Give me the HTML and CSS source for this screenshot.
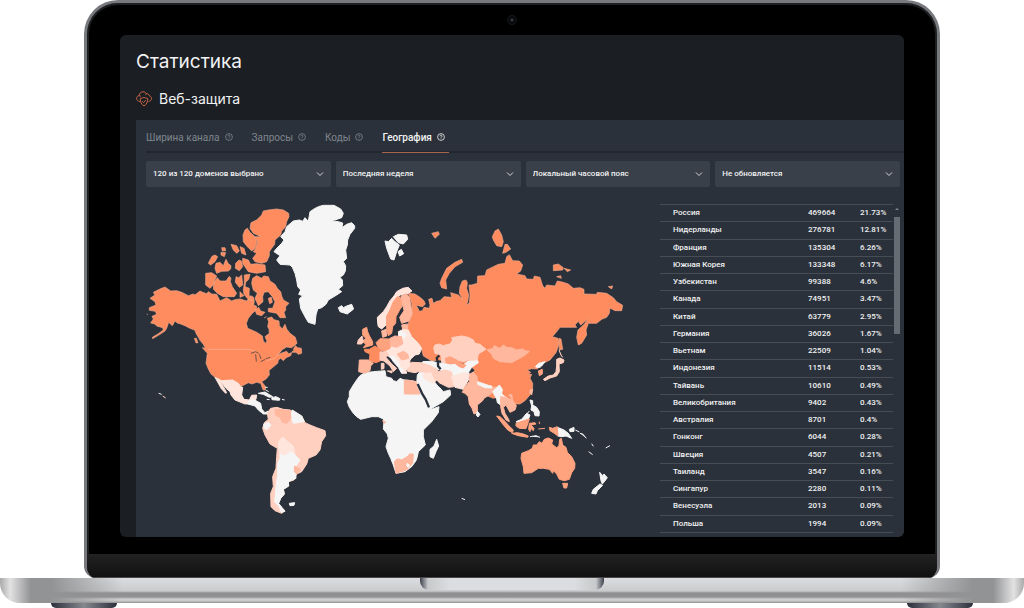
FILE: index.html
```html
<!DOCTYPE html>
<html lang="ru">
<head>
    <meta charset="UTF-8">
    <meta name="viewport" content="width=device-width, initial-scale=1.0">
    <title>Статистика</title>
    <link rel="stylesheet" href="styles.css">
</head>
<body>
<div class="laptop">
    <div class="lid">
        <div class="camera"></div>
        <main class="screen">
            <h1>Статистика</h1>
            <h2>
                <svg class="cloud" viewBox="0 0 16 16"><path d="M4.5 10.5H3.7C1.8 10.2.5 9 .6 7.3.7 5.8 1.8 4.9 3 4.7 3.2 2.4 5 .8 7 .8c1.700 0 2.800.8 3.500 2.100 1.500-.3 2.700.6 2.900 2 1.300.3 2.100 1.200 2.100 2.600 0 1.700-1.200 2.800-2.900 3"/><path d="M3 4.700c.7 0 1.300.2 1.800.6M10.500 2.900c-.6.2-1 .5-1.200.9"/><path d="M8 6.200c1.200.9 2.300 1 3.700 1.100.2 3.600-1.100 6-3.700 7.700-2.600-1.700-3.900-4.100-3.700-7.700C5.700 7.200 6.800 7.100 8 6.200z"/><path d="M6.300 10.300l1.300 1.300 2.200-2.300"/></svg>
                Веб-защита
            </h2>
            <section class="panel">
                <nav class="tabs">
                    <a href="#width">Ширина канала <svg class="help" viewBox="0 0 8 8"><circle cx="4" cy="4" r="3.400"/><path d="M3 3.300c0-1.600 2.200-1.300 2 0C4.900 3.900 4 3.900 4 4.800M4 5.500v.6"/></svg></a>
                    <a href="#requests">Запросы <svg class="help" viewBox="0 0 8 8"><circle cx="4" cy="4" r="3.400"/><path d="M3 3.300c0-1.600 2.200-1.300 2 0C4.900 3.900 4 3.900 4 4.800M4 5.500v.6"/></svg></a>
                    <a href="#codes">Коды <svg class="help" viewBox="0 0 8 8"><circle cx="4" cy="4" r="3.400"/><path d="M3 3.300c0-1.600 2.200-1.300 2 0C4.900 3.900 4 3.900 4 4.800M4 5.500v.6"/></svg></a>
                    <a href="#geo" class="active">География <svg class="help" viewBox="0 0 8 8"><circle cx="4" cy="4" r="3.400"/><path d="M3 3.300c0-1.600 2.200-1.300 2 0C4.900 3.900 4 3.900 4 4.800M4 5.500v.6"/></svg></a>
                </nav>
                <form class="filters">
                    <label class="filter"><select aria-label="Домены"><option>120 из 120 доменов выбрано</option></select><svg viewBox="0 0 8 6"><path d="M1 1.500l3 3 3-3"/></svg></label>
                    <label class="filter"><select aria-label="Период"><option>Последняя неделя</option></select><svg viewBox="0 0 8 6"><path d="M1 1.500l3 3 3-3"/></svg></label>
                    <label class="filter"><select aria-label="Часовой пояс"><option>Локальный часовой пояс</option></select><svg viewBox="0 0 8 6"><path d="M1 1.500l3 3 3-3"/></svg></label>
                    <label class="filter"><select aria-label="Обновление"><option>Не обновляется</option></select><svg viewBox="0 0 8 6"><path d="M1 1.500l3 3 3-3"/></svg></label>
                </form>
                <div class="geo">
                    <svg class="map" viewBox="146 204 510 333">
                        <!-- North America -->
                        <g transform="translate(140 195) scale(.33333)" class="c1 coast">
                            <path d="M30 310L45 300 40 292 60 282 75 276 92 288 110 287 125 292 145 302 160 297 165 300 180 288 188 292 200 296 205 290 215 297 230 298 240 318 260 308 275 318 285 314 300 312 310 315 320 318 332 302 340 306 343 318 341 330 350 334 348 345 335 357 325 370 319 385 323 400 335 405 350 412 367 423 370 438 377 445 381 438 375 425 388 415 387 402 383 395 386 380 382 370 395 366 402 374 417 378 418 392 427 402 435 388 440 402 450 415 466 427 471 445 455 458 440 456 425 465 413 480 425 474 440 469 446 476 455 473 452 482 438 488 430 497 422 490 415 495 413 505 395 520 387 526 388 540 378 552 365 560 376 574 376 585 369 584 362 565 350 562 335 567 325 563 312 570 300 575 295 563 288 566 278 555 262 558 245 557 225 547 213 537 205 522 198 505 200 490 202 475 187 458 196 460 190 448 180 436 175 427 168 415 165 406 150 400 135 392 120 386 112 384 105 378 97 392 86 382 80 400 75 408 60 418 38 431 37 427 55 416 70 405 68 398 50 393 45 387 32 384 40 372 36 364 50 358 46 349 28 346 28 338 48 330 45 320z"/>
                            <path d="M365 60L370 48 385 45 410 42 430 45 446 55 447 65 440 80 437 95 425 108 422 120 405 135 404 148 395 160 388 170 388 182 380 200 365 205 345 200 338 190 350 175 340 170 347 160 352 140 345 125 363 125 340 115 330 100 333 83 350 75zM315 105L322 100 330 112 344 124 350 140 345 160 335 168 322 155 310 140 309 120z"/>
                            <path d="M273 148L290 152 298 168 290 175 280 165zM300 155L312 160 318 180 305 175zM245 158h10l2 9-10 1zM243 172l14 1-4 12-10-5zM210 195L216 184 225 180 233 185 225 200 212 210 205 205zM228 205L240 202 250 212 258 193 265 206 273 212 272 222 265 228 245 229 230 235 225 220zM287 205L297 195 304 198 308 215 298 227 286 220zM308 190L325 195 332 208 350 206 375 210 377 230 350 235 325 230 308 205zM197 235L215 233 230 243 222 260 220 270 210 280 197 270z"/>
                            <path d="M222 262L232 248 240 258 258 258 268 244 273 250 271 260 277 275 290 295 283 305 250 305 232 295 220 282zM288 245L296 248 305 240 308 270 298 277 286 262zM313 240L330 238 326 253 317 262 315 275 328 280 327 300 337 318 322 310 312 298 310 285 313 265zM300 290L312 302 300 307zM338 250L350 242 365 250 371 243 385 245 390 258 405 268 412 280 422 290 425 303 430 315 447 325 437 335 437 345 432 352 437 368 420 368 410 355 385 350 385 340 398 340 405 320 397 305 385 290 372 292 368 305 369 320 355 332 345 310 352 295 340 285 335 265z"/>
                            <path d="M345 345L356 337 362 348 375 352 365 362 350 358zM385 310l9-3 3 15-8 4zM456 472L466 452 473 458 484 460 485 475 475 478 468 472zM163 430l6 0 5 13-6 1zM20 357l4 2M380 365l-8 4"/>
                            <path class="border" d="M205 463H328L350 470M380 497L405 490 425 466"/>
                            <path class="water" d="M333 475L347 470 356 475M347 478L349 500M358 478L363 492M362 500L376 493M378 491L391 487M451 467L461 466"/>
                        </g>
                        <!-- Greenland, Iceland, Svalbard -->
                        <g transform="translate(260 195) scale(.33333)" class="c6">
                            <path d="M175 35L190 31 222 31 233 37 242 42 250 55 245 68 225 75 210 77 235 80 248 84 246 98 260 88 275 83 284 92 284 100 270 118 263 135 262 150 257 165 260 190 250 200 257 212 256 228 250 240 240 247 247 255 248 272 235 283 245 290 230 300 205 315 198 328 185 338 173 342 168 360 165 388 145 382 135 365 122 340 118 312 128 302 116 298 122 285 113 275 110 255 105 235 97 217 90 210 60 208 50 195 60 182 42 170 50 160 65 145 72 135 62 125 75 110 80 95 100 78 118 75 128 79 135 68 145 79 150 50 162 42z"/>
                            <path d="M235 338L245 332 250 338 260 333 275 328 281 342 262 357 240 350zM375 138L385 140 395 130 405 140 418 150 410 170 402 195 392 192 380 160zM400 125L415 118 440 120 443 133 430 147 415 143zM414 170l10-7 7 13-12 7z"/>
                        </g>
                        <!-- Latin America -->
                        <g transform="translate(150 340) scale(.33333)">
                            <path class="c5" d="M195 112L215 122 248 120 265 130 272 140 278 142 275 165 282 178 298 180 305 166 320 165 318 178 300 190 285 192 255 180 243 165 240 155 228 145 210 122 220 140 230 158 227 160 214 146z"/>
                            <path class="c6" d="M290 191L304 178 318 182 332 190 335 207 345 218 355 213 352 222 340 222 325 210 315 198zM325 160L345 156 368 170 358 172 340 163zM365 173L378 170 390 176 388 181 366 179zM350 178l9 1M396 178l8 2M345 142l8 0M347 150l9 5M26 160l9 3"/>
                            <path class="c4" d="M352 220L362 205 380 202 400 208 420 210 435 218 455 228 465 248 480 255 500 263 525 272 527 287 515 305 510 330 498 345 475 355 470 372 455 395 440 402 432 420 415 425 416 438 400 448 403 462 392 475 385 490 395 503 405 512 395 520 375 512 363 500 362 460 370 440 368 410 378 385 380 350 382 325 360 312 345 285 338 265 343 248 355 238zM38 168l9 6"/>
                            <path class="c6" d="M400 345L425 330 435 345 450 360 438 378 437 400 438 415 415 425 416 438 400 448 403 462 392 475 386 490 400 508 405 514 394 517 387 500 374 485 378 440 383 405 383 370 390 355 390 340zM427 210L455 228 463 245 430 250 422 230zM342 252L355 247 363 256 350 270 341 262zM418 490L434 488 432 496 420 497z"/>
                            <path class="c5" d="M388 300L400 292 412 304 430 318 435 340 420 332 405 345 390 340 385 320z"/>
                            <path class="c3" d="M375 208L400 210 420 213 423 235 410 250 398 247 390 232 376 225zM434 378L452 388 440 402 433 395z"/>
                        </g>
                        <!-- Africa and the Middle East -->
                        <g transform="translate(340 350) scale(.33333)">
                            <path class="c6" d="M75 68L100 65 135 62 138 80 155 85 160 92 170 95 180 85 192 90 215 92 228 95 235 115 245 135 255 152 265 175 275 178 297 170 295 188 275 215 250 240 250 260 256 285 235 305 232 320 228 332 215 350 195 365 168 370 160 345 152 325 145 310 138 290 145 265 142 252 130 237 132 215 130 207 115 200 95 200 62 208 50 200 40 190 28 172 22 155 28 140 28 125 40 105 50 90 60 77zM270 320L270 298 282 288 290 268 296 288 288 305 280 325z"/>
                            <path class="c6" d="M232 75L240 65 262 62 280 90 290 103 310 125 330 120 332 135 310 155 270 178 262 165 250 145 242 122 230 100z"/>
                            <path class="c5" d="M248 75L262 60 280 70 290 98 275 98 255 88z"/>
                            <path class="c3" d="M193 90L215 92 230 97 229 108 240 132 193 132zM163 335L172 326 185 330 205 318 208 312 220 312 218 340 200 360 168 370zM128 212l9 4-4 4z"/>
                            <path class="c6" d="M202 340l7 6-4 6-5-5z"/>
                            <path class="water fat" d="M233 102L246 130 257 148 267 172"/>
                        </g>
                        <!-- Europe, Russia, Central Asia -->
                        <g transform="translate(340 280) scale(.33333)">
                            <path class="c1 coast" d="M205 40L225 42 240 52 252 62 256 72 248 80 228 76 234 85 238 94 247 92 252 82 268 85 270 75 266 58 276 55 280 70 290 64 300 62 312 50 335 52 332 38 355 45 368 57 358 40 360 20 367 3 378 0 382 8 380 25 386 45 383 66 378 75 388 69 390 45 387 15 395 15 412 10 413-12 435-13 440-30 460-40 475-47 495-50 500-70 508-76 518-58 538-57 548-45 542-27 530-18 555-13 560-3 580-2 583-12 600-8 608 17 615 25 620 15 645 18 652 3 670 7 685 12 700 25 720 23 732 28 732 42 770 43 772 37 800 40 820 53 830 65 848 76 845 92 825 92 810 84 808 100 800 112 785 118 770 130 745 130 738 150 740 165 725 190 715 195 710 172 714 150 725 140 735 130 744 117 722 135 715 124 705 135 710 142 660 142 650 155 637 170 654 175 658 190 648 218 630 240 610 250 592 267 575 266 562 270 572 277 565 283 575 283 570 295 578 310 578 325 570 345 555 362 540 372 525 372 505 367 485 360 480 350 460 355 435 345 420 335 400 320 405 300 390 290 405 270 380 250 330 250 300 240 275 243 250 228 244 205 215 170 200 150 205 130 217 100 215 70z"/>
                            <path class="c1 coast" d="M300 10L305-5 320-35 345-53 365-62 368-53 345-40 328-20 317 0 320 27 305 23zM457-130L465-147 475-153 485-135 490-115 485-100 470-103 460-120zM495-107L502-107 512-93 498-83 488-80zM640-45L655-48 670-37 668-30 640-28zM672-35L692-30 682-25zM650-10l12-3 2 8zM805 20l13-2-3 9zM275-140L295-145 298-137 285-125zM657 175L663 177 668 208 658 210z"/>
                            <path class="c6" d="M240 245L275 244 300 250 320 245 345 250 365 258 385 243 412 240 415 248 395 262 387 275 380 300 365 320 340 315 325 285 300 270 270 262z"/>
                            <path class="c4" d="M281 203L285 195 300 192 308 197 330 192 338 180 335 173 365 168 385 172 400 180 405 190 420 193 438 208 415 222 412 240 385 240 370 245 350 240 325 230 315 235 320 250 305 247 303 225 285 220z"/>
                            <path class="c2" d="M317 235L330 230 350 240 362 250 378 256 370 264 358 260 345 250 330 252 318 248z"/>
                            <path class="c3" d="M441 210L460 205 462 197 480 205 490 195 500 202 515 203 530 210 548 207 555 212 568 214 555 226 530 240 515 248 480 245 460 235 455 222z"/>
                            <path class="c4" d="M200 255L215 247 240 248 262 254 278 260 280 272 262 277 235 275 225 278 203 274z"/>
                            <path class="c4" d="M272 264L287 264 296 275 315 270 334 275 338 290 342 320 325 322 305 312 290 305 277 285z"/>
                            <path class="c5" d="M335 290L358 282 375 278 390 282 385 300 370 328 345 322z"/>
                            <path class="c3" d="M390 282L400 276 411 290 412 308 440 320 470 322 460 335 455 340 432 355 428 362 412 375 412 398 402 402 396 385 388 372 385 350 375 340 367 337 375 320 388 305z"/>
                            <path class="c6" d="M413 305L445 316 455 318 455 324 435 323 413 313zM412 394l8 9-6 8-5-5z"/>
                            <path class="c5" d="M113 130L112 112 130 95 140 80 150 62 162 48 170 35 188 25 205 22 216 33 205 40 180 45 165 65 150 90 140 110 138 135 125 147 115 140z"/>
                            <path class="c2" d="M160 65L172 50 185 55 190 75 180 88 168 110 167 130 158 140 155 160 145 167 140 150 140 128 140 108 150 90z"/>
                            <path class="c3" d="M183 48L200 42 208 52 212 75 217 100 207 123 185 130 179 112 192 92 188 70zM185 135L203 132 203 150 188 148zM125 153L138 148 140 168 128 172z"/>
                            <path class="c2" d="M68 148L80 142 83 155 88 167 98 185 98 195 85 199 70 203 78 193 68 185 77 175 68 165z"/>
                            <path class="c4" d="M55 180L66 168 70 183 65 192 52 192z"/>
                            <path class="c5" d="M175 155L190 148 205 150 215 170 235 190 245 205 238 222 225 225 210 240 208 260 198 270 200 280 186 280 178 262 160 240 142 226 130 205 150 190 178 180z"/>
                            <path class="c6" d="M178 155L190 155 200 165 185 180 175 172zM150 228L162 230 175 245 180 262 190 270 185 280 175 262 160 245z"/>
                            <path class="c1" d="M73 208L88 208 105 198 125 212 120 228 122 242 108 248 88 242 90 222 75 215z"/>
                            <path class="c2" d="M108 188L120 176 150 177 152 195 150 205 132 214 116 205z"/>
                            <path class="c3" d="M150 175L165 168 185 170 188 192 170 202 152 197zM58 240L85 240 100 250 92 258 90 272 75 280 56 275zM172 222L190 214 203 222 206 235 185 240z"/>
                            <path class="c4" d="M120 216L140 215 145 225 138 232 155 252 170 265 160 275 150 258 132 243 120 240zM124 250l8 0 0 16-8 2zM142 273l14 0 0 6z"/>
                            <path class="water fat" d="M298 226L290 234 294 248 294 258 302 268M215 240L232 238 245 243 225 240M288 304L300 318 312 322"/>
                        </g>
                        <!-- South-East Asia, Australia -->
                        <g transform="translate(460 350) scale(.33333)">
                            <path class="c6" d="M98 125L108 115 118 105 127 118 125 132 135 140 150 150 155 160 148 162 132 148 122 165 112 158 110 147zM210 150L218 152 218 165 230 172 238 185 237 198 225 197 222 185 213 180 215 168zM198 195l10-12M168 215L185 208 200 190 210 195 205 208 188 212 175 220zM292 232L312 240 325 250 335 265 318 258 305 260 293 258zM328 238L342 232 342 244 330 245zM346 240l12 6M360 250L368 252 379 265M395 281l5 8M386 305l12 9M437 294l13-7M419 367L428 377 432 372 442 383 433 395 427 402 423 392zM420 402L428 406 412 422 408 432 395 430 400 418zM5 445l10 4M210 260L228 257 240 262M226 50L236 40 255 35 245 48 240 52 230 52z"/>
                            <path class="c3" d="M122 140L135 142 150 150 155 145 146 135 155 133 158 150 169 167 165 180 150 187 138 165 130 172 135 190 146 208 148 215 138 210 126 190 122 170zM211 120L218 118 215 135 209 128z"/>
                            <path class="c2" d="M110 198L120 200 135 214 147 228 160 240 157 248 143 240 128 222zM155 250L172 248 190 252 205 258 203 262 175 257zM168 220L188 213 208 207 203 222 198 236 178 235 168 228zM208 220L225 218 228 222 213 225 222 235 220 242 212 235 210 245 206 238zM268 232L278 235 292 230 294 258 280 248 270 242zM235 237l20-2M238 215l0 7M235 63L247 58 247 72 238 77z"/>
                            <path class="c4" d="M250 88L265 78 280 75 288 65 290 48 290 28 300 24 312 30 310 38 297 42 298 65 290 78 270 84 255 92zM297 0L303 15 308 22"/>
                            <path class="c2" d="M185 310L205 302 217 295 220 285 230 285 238 275 246 280 253 268 265 264 278 270 275 282 290 293 297 287 299 268 304 265 308 285 318 292 322 307 335 320 345 340 344 355 335 368 328 388 313 392 298 388 290 372 280 362 278 370 268 358 250 355 235 355 215 368 192 370 190 350 183 325zM308 400L323 400 320 414 312 414z"/>
                        </g>
                    </svg>
                    <div class="countries">
                        <table>
                            <tr><td>Россия</td><td>469664</td><td>21.73%</td></tr>
                            <tr><td>Нидерланды</td><td>276781</td><td>12.81%</td></tr>
                            <tr><td>Франция</td><td>135304</td><td>6.26%</td></tr>
                            <tr><td>Южная Корея</td><td>133348</td><td>6.17%</td></tr>
                            <tr><td>Узбекистан</td><td>99388</td><td>4.6%</td></tr>
                            <tr><td>Канада</td><td>74951</td><td>3.47%</td></tr>
                            <tr><td>Китай</td><td>63779</td><td>2.95%</td></tr>
                            <tr><td>Германия</td><td>36026</td><td>1.67%</td></tr>
                            <tr><td>Вьетнам</td><td>22509</td><td>1.04%</td></tr>
                            <tr><td>Индонезия</td><td>11514</td><td>0.53%</td></tr>
                            <tr><td>Тайвань</td><td>10610</td><td>0.49%</td></tr>
                            <tr><td>Великобритания</td><td>9402</td><td>0.43%</td></tr>
                            <tr><td>Австралия</td><td>8701</td><td>0.4%</td></tr>
                            <tr><td>Гонконг</td><td>6044</td><td>0.28%</td></tr>
                            <tr><td>Швеция</td><td>4507</td><td>0.21%</td></tr>
                            <tr><td>Таиланд</td><td>3547</td><td>0.16%</td></tr>
                            <tr><td>Сингапур</td><td>2280</td><td>0.11%</td></tr>
                            <tr><td>Венесуэла</td><td>2013</td><td>0.09%</td></tr>
                            <tr><td>Польша</td><td>1994</td><td>0.09%</td></tr>
                        </table>
                        <div class="scrollbar"><svg viewBox="0 0 6 4"><path d="M1 3l2-2 2 2z"/></svg><div class="thumb"></div></div>
                    </div>
                </div>
            </section>
        </main>
        <div class="chin"></div>
    </div>
    <div class="base"><div class="notch"></div></div>
    <div class="feet"><div class="foot"></div><div class="foot"></div></div>
</div>
</body>
</html>
```
FILE: styles.css
```css
*{box-sizing:border-box;}
body{margin:0;background:#fff;color:#f1f2f3;font-family:Inter,"Open Sans",sans-serif;}
.laptop{display:flex;flex-direction:column;}
.lid{margin:0 84px;border:3px solid #77797e;border-bottom-width:0;border-radius:34px 34px 12px 12px;background:#000;box-shadow:inset 0 0 0 2px #1d1f21;overflow:hidden;}
.camera{width:10px;height:10px;margin:12px auto 10px;border:1px solid #17181a;border-radius:50%;background:radial-gradient(circle,#36383b 0 1px,#08090a 2px);}
.screen{margin:0 33px 17px;padding:15px 0 0 16px;background:#1b1e22;border-radius:6px;overflow:hidden;}
h1,h2{margin:0;font-weight:400;line-height:24px;}
h1{font-size:19px;}
h2{display:flex;align-items:center;gap:7px;margin-top:13px;font-size:14px;}
.cloud{width:16px;height:16px;fill:none;stroke:#c9664a;stroke-width:1;}
.panel{margin-top:9px;padding-left:10px;background:#2b313a;font-family:Roboto,"Open Sans",sans-serif;}
.tabs{display:flex;gap:19px;border-bottom:2px solid #22262d;}
.tabs a{display:flex;align-items:center;gap:5px;height:33px;margin-bottom:-2px;padding-top:2px;border-bottom:1px solid transparent;color:#7f858d;font-size:10px;text-decoration:none;}
.tabs .active{padding-right:4px;border-color:#a8634f;color:#f1f2f3;font-weight:500;}
.help{width:8px;height:8px;fill:none;stroke:currentColor;stroke-width:.8;}
.filters{display:grid;grid-template-columns:repeat(4,1fr);gap:5px;margin:8px 4px 17px 0;}
.filter{display:flex;align-items:center;height:26px;padding-right:7px;border-radius:2px;background:#3a4049;}
.filter select{flex:1;min-width:0;height:26px;padding:0 7px 2px;border:0;outline:0;background:none;appearance:none;color:#f1f2f3;font:500 8px Roboto,"Open Sans",sans-serif;}
.filter svg{width:8px;height:6px;fill:none;stroke:#d5d7da;stroke-width:1;}
.geo{display:grid;grid-template-columns:1fr 240px;gap:4px;margin-right:4px;}
.map{display:block;width:100%;}
.c1{fill:#ff8c5f;stroke:#ff8c5f;}
.c2{fill:#ffa27e;stroke:#ffa27e;}
.c3{fill:#ffb79e;stroke:#ffb79e;}
.c4{fill:#ffd0c0;stroke:#ffd0c0;}
.c5{fill:#ffe5dc;stroke:#ffe5dc;}
.c6{fill:#f5f5f5;stroke:#f5f5f5;}
.map path{stroke-width:3;stroke-linejoin:round;}
.coast{stroke:#f0a78c;}
.map .coast,.map .coast path{stroke-width:2;}
.map .border{fill:none;stroke:#ffb497;}
.map .water{fill:none;stroke:#2b313a;stroke-width:4;}
.map .fat{stroke-width:7;}
.countries{display:flex;padding-bottom:4px;}
table{flex:1;height:100%;border-collapse:collapse;border-top:1px solid #474d55;font-size:8px;font-weight:500;line-height:10px;}
tr{border-bottom:1px solid #474d55;}
td{padding:0;}
td:first-child{padding-left:13px;}
td:nth-child(2){width:52px;}
td:last-child{width:33px;}
.scrollbar{width:7px;padding:3px 0 0 1px;}
.scrollbar svg{display:block;width:6px;height:4px;margin-bottom:6px;fill:#7f858d;}
.thumb{height:36%;background:#666c74;}
.chin{height:24px;background:linear-gradient(#222,#111);border-bottom:1px solid #4a4648;}
.base{height:25px;border-radius:0 0 20px 20px;background:linear-gradient(90deg,#aaa,#e2e2e3 1%,#929395 3%,#929395 5%,rgba(146,147,149,0) 12%,rgba(146,147,149,0) 88%,#929395 95%,#929395 97%,#e2e2e3 99%,#aaa),linear-gradient(#dcdde0,#cacbcd 13px,#8f8e90 15px,#929193 19px,#d0d0d1 21px,#c8c8c9 23px,#8d8d8e 25px);}
.notch{width:184px;height:12px;margin:0 auto;border-radius:0 0 9px 9px;background:linear-gradient(90deg,#3a3f4a,#c8c9cb 8px,#dcdde0 30px,#dcdde0 154px,#c8c9cb 176px,#3a3f4a);}
.feet{display:flex;justify-content:space-between;padding:0 51px;}
.foot{width:66px;height:5px;border-radius:0 0 8px 8px;background:linear-gradient(90deg,#2c303b,#85888e 50%,#2c303b);}
```
